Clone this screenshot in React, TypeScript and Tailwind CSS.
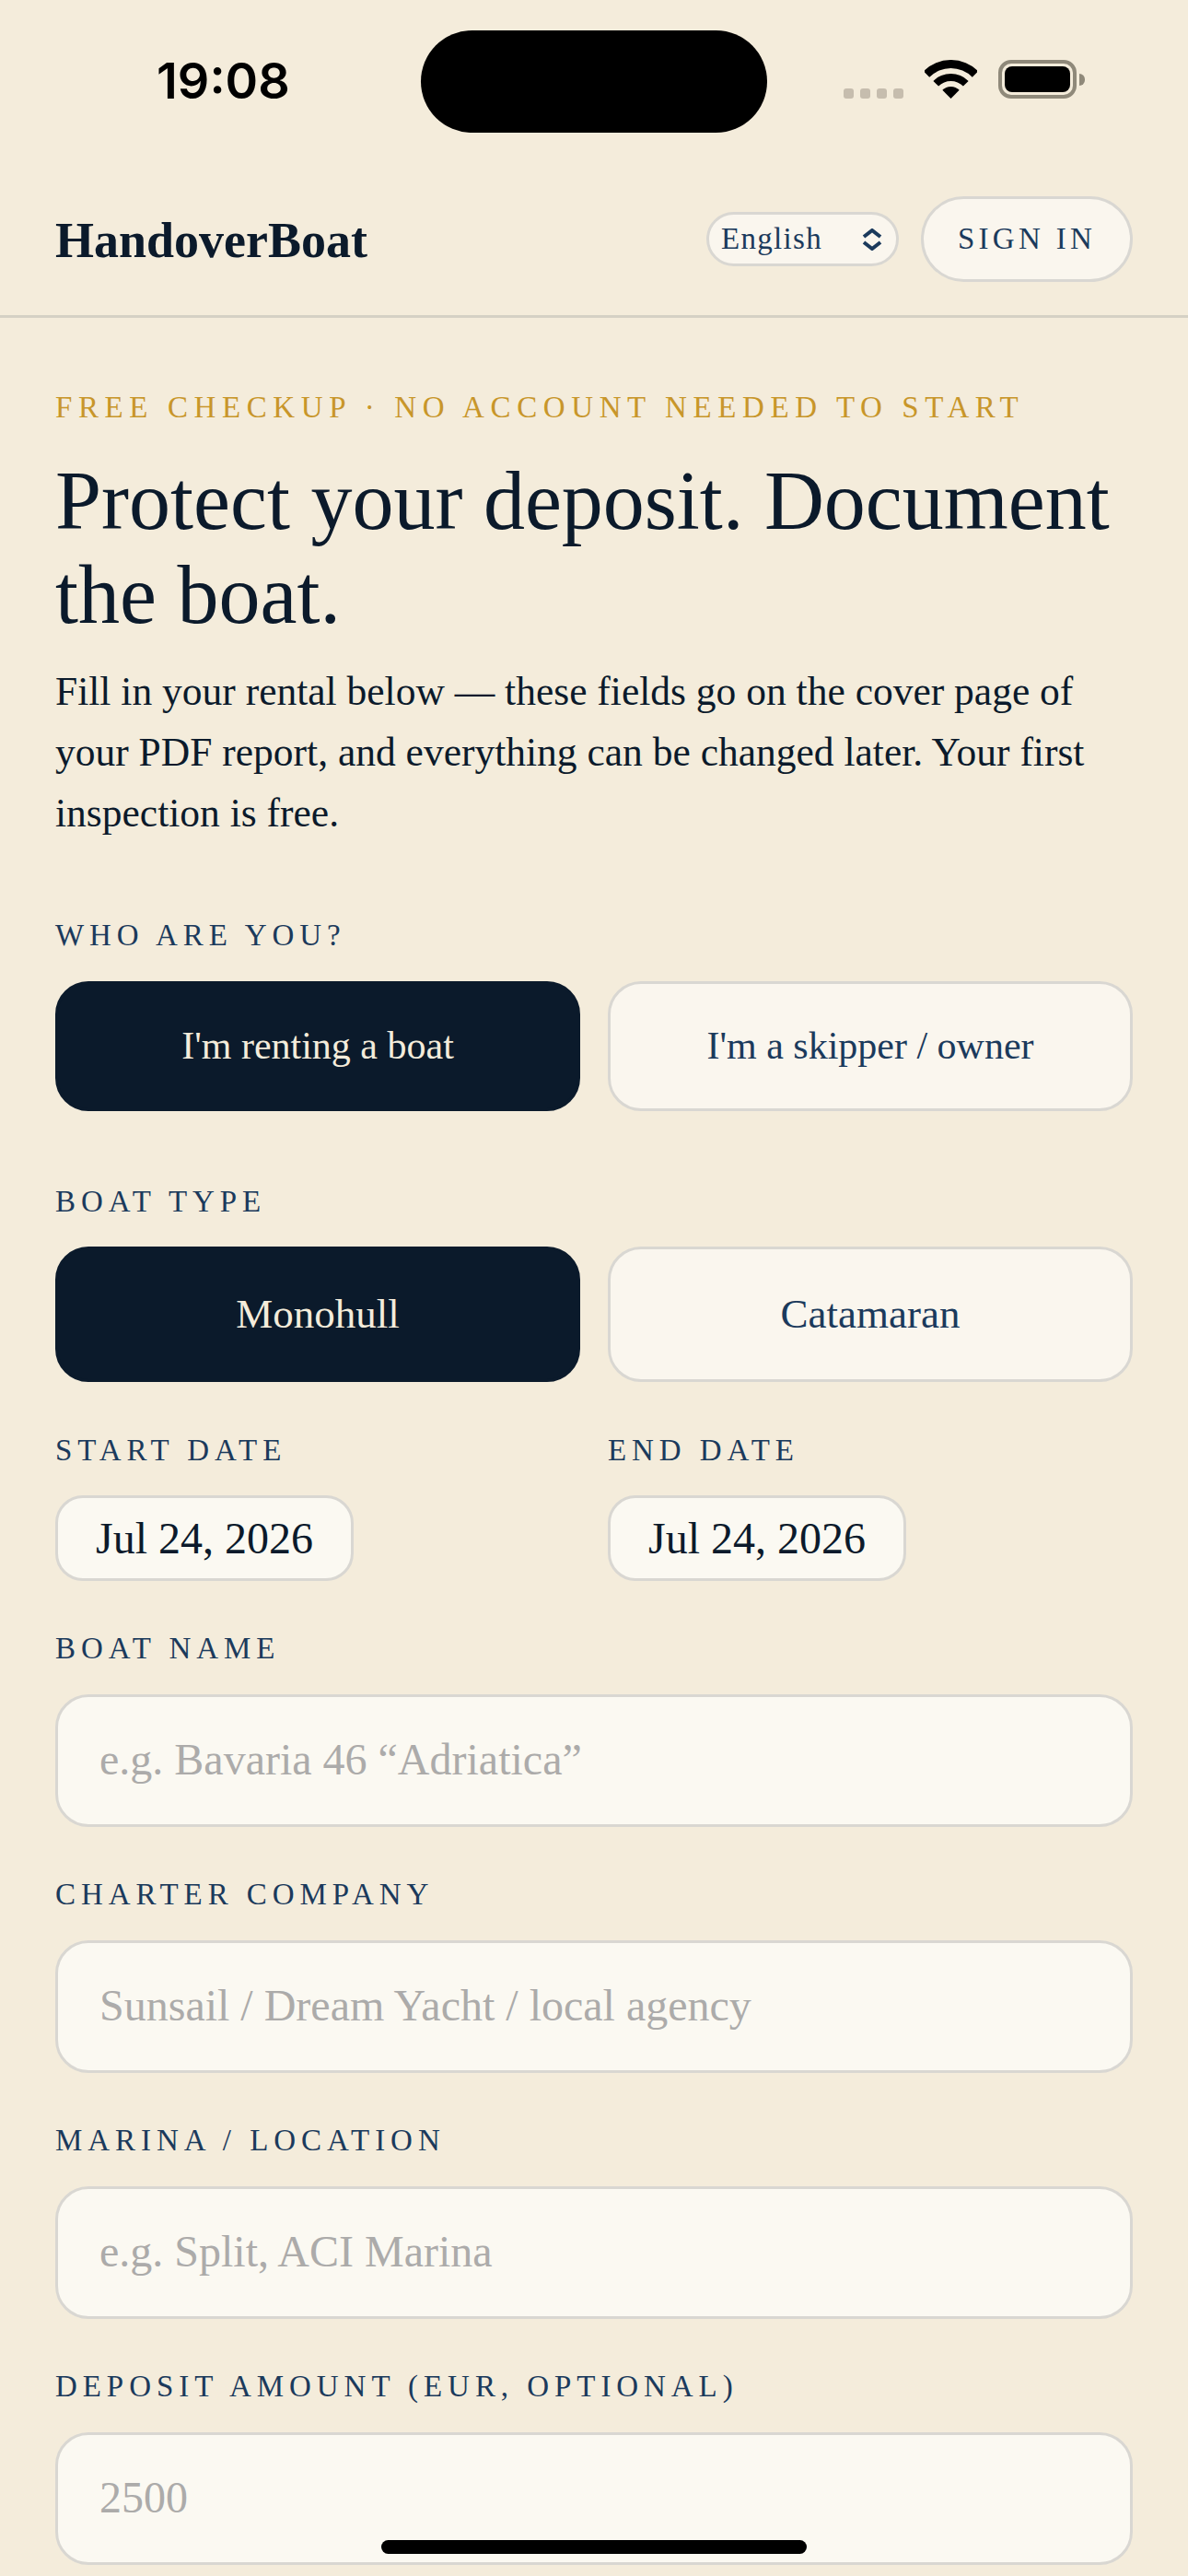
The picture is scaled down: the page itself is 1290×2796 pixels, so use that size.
function Label({ children, className = "" }: { children: React.ReactNode; className?: string }) {
  return <div className={"text-[33px] leading-[40px] tracking-[5.94px] uppercase text-[#1b3a5c] " + className}>{children}</div>;
}

function Field({ label, placeholder }: { label: string; placeholder: string }) {
  return (
    <div className="mt-[53px]">
      <Label>{label}</Label>
      <input
        readOnly
        placeholder={placeholder}
        className="mt-[30px] block h-[144px] w-full rounded-[36px] border-[3px] border-[#d9d7d2] bg-[#fbf9f2] px-[45px] pb-[4px] text-[48px] text-[#0b1a2b] placeholder:text-[#acabaa] outline-none"
      />
    </div>
  );
}

function Choice({ label, active, size }: { label: string; active?: boolean; size: string }) {
  return (
    <button
      className={
        "flex-1 rounded-[36px] border-[3px] " +
        size +
        " " +
        (active ? "border-[#0b1a2b] bg-[#0b1a2b] text-[#f4ecdb]" : "border-[#d9d7d2] bg-[#faf6ee] text-[#1b3a5c]")
      }
    >
      {label}
    </button>
  );
}

function DateBox({ label }: { label: string }) {
  return (
    <div className="flex-1">
      <Label>{label}</Label>
      <div className="mt-[29px] flex h-[93px] w-[324px] items-center rounded-[30px] border-[3px] border-[#d9d7d2] bg-[#fbf9f2] pl-[41px] text-[48px] text-[#0b1a2b]">
        Jul 24, 2026
      </div>
    </div>
  );
}

export default function App() {
  return (
    <div className="relative h-[2796px] w-[1290px] overflow-hidden bg-[#f4ecdb] font-['Liberation_Serif',serif]">
      {/* status bar */}
      <div className="flex h-[177px] items-start">
        <div className="ml-[170px] mt-[58px] w-[143px] font-['Inter',sans-serif] text-[54px] font-semibold leading-[60px] tracking-[0px] text-black">19:08</div>
        <div className="ml-[144px] mt-[33px] h-[111px] w-[376px] rounded-full bg-black" />
        <div className="ml-[83px] mt-[96px] flex gap-[7px]">
          <span className="h-[11px] w-[11px] rounded-[3px] bg-[#c6bdae]" />
          <span className="h-[11px] w-[11px] rounded-[3px] bg-[#c6bdae]" />
          <span className="h-[11px] w-[11px] rounded-[3px] bg-[#c6bdae]" />
          <span className="h-[11px] w-[11px] rounded-[3px] bg-[#c6bdae]" />
        </div>
        <svg className="ml-[23px] mt-[65px]" width="57" height="42" viewBox="0 0 57 42" fill="black">
          <path d="M-1.2 12.3A42 42 0 0 1 58.2 12.3L51.8 18.7A33 33 0 0 0 5.2 18.7Z" />
          <path d="M9.4 22.9A27 27 0 0 1 47.6 22.9L41.9 28.6A19 19 0 0 0 15.1 28.6Z" />
          <path d="M19.3 32.8A13 13 0 0 1 37.7 32.8L28.5 42Z" />
        </svg>
        <div className="ml-[23px] mt-[65px] flex items-center">
          <div className="h-[42px] w-[85px] rounded-[14px] border-[4px] border-[#8f897a] p-[3px]">
            <div className="h-full w-full rounded-[8px] bg-black" />
          </div>
          <span className="ml-[3px] h-[13px] w-[6px] rounded-r-full bg-[#8f897a]" />
        </div>
      </div>

      {/* nav */}
      <div className="flex h-[168px] items-center justify-between border-b-[3px] border-[#d5d1c4] px-[60px]">
        <div className="pt-[4px] text-[54px] font-bold text-[#0b1a2b]">HandoverBoat</div>
        <div className="flex items-center gap-[24px]">
          <div className="flex h-[59px] w-[209px] items-center justify-between rounded-full border-[3px] border-[#d9d7d2] bg-[#faf6ee] pl-[13px] pr-[15px] text-[33px] tracking-[1.32px] text-[#1b3a5c]">
            English
            <svg width="22" height="24" viewBox="0 0 22 24" fill="none" stroke="#1b3a5c" strokeWidth="4">
              <path d="M2 9L11 2L20 9" />
              <path d="M2 15L11 22L20 15" />
            </svg>
          </div>
          <button className="h-[93px] w-[230px] rounded-full border-[3px] border-[#d9d7d2] bg-[#faf6ee] text-[33px] tracking-[4.3px] text-[#1b3a5c]">SIGN IN</button>
        </div>
      </div>

      {/* form */}
      <div className="px-[60px]">
        <div className="mt-[77px] text-[33px] leading-[40px] tracking-[6.6px] uppercase text-[#c8962a]">Free checkup · no account needed to start</div>
        <h1 className="mt-[31px] text-[90px] leading-[102px] text-[#0b1a2b]">Protect your deposit. Document the boat.</h1>
        <p className="mt-[20px] text-[43.5px] leading-[66px] text-[#0b1a2b]">
          Fill in your rental below — these fields go on the cover page of your PDF report, and everything can be changed later. Your first inspection is free.
        </p>

        <Label className="mt-[80px]">Who are you?</Label>
        <div className="mt-[30px] flex gap-[30px]">
          <Choice label="I'm renting a boat" active size="h-[141px] text-[42px]" />
          <Choice label="I'm a skipper / owner" size="h-[141px] text-[42px]" />
        </div>

        <Label className="mt-[78px]">Boat type</Label>
        <div className="mt-[29px] flex gap-[30px]">
          <Choice label="Monohull" active size="h-[147px] text-[45px]" />
          <Choice label="Catamaran" size="h-[147px] text-[45px]" />
        </div>

        <div className="mt-[54px] flex gap-[30px]">
          <DateBox label="Start date" />
          <DateBox label="End date" />
        </div>

        <Field label="Boat name" placeholder="e.g. Bavaria 46 “Adriatica”" />
        <Field label="Charter company" placeholder="Sunsail / Dream Yacht / local agency" />
        <Field label="Marina / location" placeholder="e.g. Split, ACI Marina" />
        <Field label="Deposit amount (EUR, optional)" placeholder="2500" />
      </div>

      {/* home indicator */}
      <div className="absolute bottom-[24px] left-[414px] h-[15px] w-[462px] rounded-full bg-black" />
    </div>
  );
}
